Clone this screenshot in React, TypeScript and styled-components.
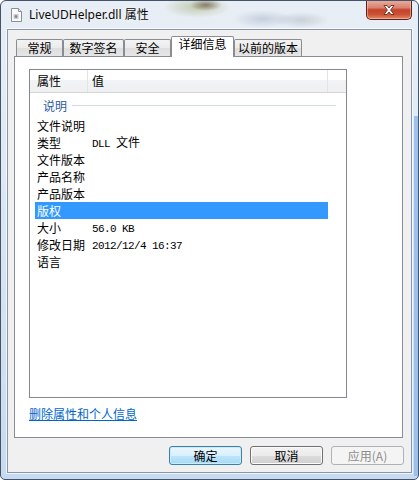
import React from 'react';
import styled, { createGlobalStyle, css } from 'styled-components';

const GlobalStyle = createGlobalStyle`
  html, body { margin: 0; padding: 0; background: #ffffff; }
  body { font-family: "Noto Sans CJK SC", "Noto Sans", sans-serif; font-size: 12px; color: #000; }
  * { box-sizing: border-box; }
`;

const Window = styled.div`
  position: relative;
  width: 419px;
  height: 480px;
  border: 1px solid #43536a;
  border-radius: 6px 6px 5px 5px;
  display: flex;
  flex-direction: column;
  overflow: hidden;
  background-color: #d3e1f1;
  background-image:
    linear-gradient(to right, transparent 413px, rgba(150, 189, 236, 0.9) 413px),
    radial-gradient(ellipse 16px 6px at 205px 4px, rgba(90, 66, 40, 0.6), transparent),
    radial-gradient(ellipse 34px 11px at 196px 6px, rgba(150, 160, 92, 0.45), transparent),
    radial-gradient(ellipse 30px 9px at 262px 18px, rgba(120, 140, 170, 0.3), transparent),
    radial-gradient(ellipse 28px 8px at 300px 19px, rgba(130, 140, 150, 0.3), transparent),
    linear-gradient(to bottom, #e8eef5 0%, #dfe8f3 35%, #c8daef 100%);
  background-size: 100% 360px, 100% 100%, 100% 100%, 100% 100%, 100% 100%, 100% 100%;
  background-position: 0 115px, 0 0, 0 0, 0 0, 0 0, 0 0;
  background-repeat: no-repeat;
`;

const TitleBar = styled.div`
  flex: none;
  height: 28px;
  display: flex;
  align-items: center;
  padding-left: 10px;
  gap: 7px;
`;

const TitleText = styled.span`
  font-family: "Noto Sans", "Noto Sans CJK SC", sans-serif;
  font-size: 12px;
  line-height: 16px;
  color: #0b0b0b;
  text-shadow: 0 0 6px rgba(255, 255, 255, 0.9);
`;

const CloseButton = styled.div`
  position: absolute;
  top: -1px;
  right: 6px;
  width: 46px;
  height: 20px;
  border: 1px solid #5c2118;
  border-top: none;
  border-radius: 0 0 5px 5px;
  background: linear-gradient(
    to bottom,
    #eab0a2 0%,
    #d9826f 40%,
    #c4432c 52%,
    #cc4f34 75%,
    #e08a63 100%
  );
  box-shadow: inset 0 0 0 1px rgba(255, 210, 200, 0.5);
  display: flex;
  align-items: center;
  justify-content: center;
`;

const Client = styled.div`
  flex: 1;
  margin: 0 6px 6px 6px;
  border: 1px solid #8596ad;
  box-shadow: 0 0 0 1px rgba(255, 255, 255, 0.7);
  background: #f0f0f0;
  padding: 6px 8px 0 6px;
  display: flex;
  flex-direction: column;
`;

const TabStrip = styled.div`
  flex: none;
  height: 20px;
  padding-left: 2px;
  display: flex;
  align-items: flex-end;
  position: relative;
  z-index: 1;
`;

const Tab = styled.div<{ $w: number; $active?: boolean }>`
  width: ${(p) => p.$w}px;
  flex: none;
  text-align: center;
  border: 1px solid #898c95;
  border-bottom: none;
  border-radius: 2px 2px 0 0;
  font-size: 12px;
  ${(p) =>
    p.$active
      ? css`
          height: 21px;
          margin-bottom: -1px;
          background: #ffffff;
          line-height: 14px;
        `
      : css`
          height: 17px;
          background: linear-gradient(to bottom, #f3f3f3 0%, #ebebeb 50%, #dedede 51%, #e6e6e6 100%);
          line-height: 16px;
        `}
`;

const Panel = styled.div`
  flex: none;
  height: 382px;
  border: 1px solid #898c95;
  background: #ffffff;
  padding: 12px 0 0 14px;
  display: flex;
  flex-direction: column;
  align-items: flex-start;
`;

const ListView = styled.div`
  width: 318px;
  height: 329px;
  border: 1px solid #828790;
  background: #ffffff;
  overflow: hidden;
`;

const Header = styled.div`
  height: 23px;
  display: flex;
  border-bottom: 1px solid #d5d5d5;
  background: linear-gradient(to bottom, #ffffff 0%, #ffffff 45%, #f2f3f5 46%, #eef0f2 100%);
`;

const HeaderCell = styled.div<{ $w?: number; $pad?: number }>`
  ${(p) => (p.$w ? `width: ${p.$w}px; flex: none;` : 'flex: 1;')}
  padding-left: ${(p) => p.$pad ?? 0}px;
  line-height: 22px;
  font-size: 12px;
  border-right: ${(p) => (p.$w ? '1px solid #e2e4e8' : 'none')};
`;

const GroupHeader = styled.div`
  height: 24px;
  display: flex;
  align-items: center;
  padding-left: 13px;
  gap: 5px;
  color: #2d5a9e;
  font-size: 12px;
`;

const GroupLine = styled.div`
  flex: 1;
  height: 1px;
  margin-right: 10px;
  background: #d3dbe6;
`;

const Row = styled.div<{ $selected?: boolean }>`
  height: 17px;
  width: 293px;
  margin-left: 5px;
  padding-left: 2px;
  display: flex;
  align-items: center;
  line-height: 17px;
  font-size: 12px;
  white-space: nowrap;
  background: ${(p) => (p.$selected ? '#3399ff' : 'transparent')};
  color: ${(p) => (p.$selected ? '#ffffff' : '#000000')};
`;

const Label = styled.span`
  width: 55px;
  flex: none;
`;

const Value = styled.span`
  flex: 1;
`;

const Mono = styled.span`
  font-family: "Liberation Mono", monospace;
  font-size: 11px;
  letter-spacing: -0.6px;
  white-space: pre;
`;

const Link = styled.a`
  margin-top: 7px;
  line-height: 17px;
  font-size: 12px;
  color: #0066cc;
  text-decoration: underline;
  cursor: pointer;
`;

const ButtonRow = styled.div`
  margin-top: 8px;
  margin-right: -1px;
  display: flex;
  justify-content: flex-end;
  gap: 8px;
`;

const Button = styled.div<{ $variant?: 'default' | 'normal' | 'disabled' }>`
  width: 73px;
  height: 19px;
  border-radius: 3px;
  text-align: center;
  font-size: 12px;
  line-height: 17px;
  ${(p) =>
    p.$variant === 'default'
      ? css`
          border: 1px solid #3c7fb1;
          background: linear-gradient(to bottom, #eaf6fd 0%, #d9f0fc 50%, #bee6fd 51%, #a7d9f5 100%);
          box-shadow: inset 0 0 0 1px #c9ecfb;
          color: #000;
        `
      : p.$variant === 'disabled'
      ? css`
          border: 1px solid #adb2b5;
          background: #f4f4f4;
          color: #8d8d8d;
        `
      : css`
          border: 1px solid #707070;
          background: linear-gradient(to bottom, #f2f2f2 0%, #ebebeb 50%, #dddddd 51%, #cfcfcf 100%);
          box-shadow: inset 0 0 0 1px #fbfbfb;
          color: #000;
        `}
`;

const DllIcon = () => (
  <svg width="11" height="14" viewBox="0 0 11 14">
    <path d="M0.5 0.5 H7.5 L10.5 3.5 V13.5 H0.5 Z" fill="#fbfbfb" stroke="#8a8f96" />
    <path d="M7.5 0.5 V3.5 H10.5" fill="#e4e6ea" stroke="#8a8f96" />
    <rect x="2.5" y="6" width="5" height="5" fill="#c9ccd1" />
    <circle cx="5" cy="8.5" r="1.3" fill="#7d838b" />
  </svg>
);

const CloseGlyph = () => (
  <svg width="14" height="12" viewBox="0 0 14 12">
    <path
      d="M2 1.5 L5 1.5 L7 4 L9 1.5 L12 1.5 L8.6 6 L12 10.5 L9 10.5 L7 8 L5 10.5 L2 10.5 L5.4 6 Z"
      fill="#ffffff"
      stroke="#6b2a1f"
      strokeWidth="0.9"
      strokeLinejoin="round"
    />
  </svg>
);

const renderValue = (text: string) => {
  const parts = text.match(/[\x00-\x7f]+|[^\x00-\x7f]+/g) || [];
  return parts.map((part, i) =>
    /^[\x00-\x7f]+$/.test(part) ? <Mono key={i}>{part}</Mono> : <span key={i}>{part}</span>
  );
};

const rows: { label: string; value: string; selected?: boolean }[] = [
  { label: '文件说明', value: '' },
  { label: '类型', value: 'DLL 文件' },
  { label: '文件版本', value: '' },
  { label: '产品名称', value: '' },
  { label: '产品版本', value: '' },
  { label: '版权', value: '', selected: true },
  { label: '大小', value: '56.0 KB' },
  { label: '修改日期', value: '2012/12/4 16:37' },
  { label: '语言', value: '' },
];

const tabs: { label: string; w: number; active?: boolean }[] = [
  { label: '常规', w: 47 },
  { label: '数字签名', w: 61 },
  { label: '安全', w: 47 },
  { label: '详细信息', w: 63, active: true },
  { label: '以前的版本', w: 68 },
];

export default function App() {
  return (
    <>
      <GlobalStyle />
      <Window>
        <TitleBar>
          <DllIcon />
          <TitleText>LiveUDHelper.dll 属性</TitleText>
        </TitleBar>
        <CloseButton>
          <CloseGlyph />
        </CloseButton>
        <Client>
          <TabStrip>
            {tabs.map((t) => (
              <Tab key={t.label} $w={t.w} $active={t.active}>
                {t.label}
              </Tab>
            ))}
          </TabStrip>
          <Panel>
            <ListView>
              <Header>
                <HeaderCell $w={58} $pad={7}>属性</HeaderCell>
                <HeaderCell $w={240} $pad={4}>值</HeaderCell>
                <HeaderCell />
              </Header>
              <GroupHeader>
                <span>说明</span>
                <GroupLine />
              </GroupHeader>
              {rows.map((r) => (
                <Row key={r.label} $selected={r.selected}>
                  <Label>{r.label}</Label>
                  <Value>{renderValue(r.value)}</Value>
                </Row>
              ))}
            </ListView>
            <Link>删除属性和个人信息</Link>
          </Panel>
          <ButtonRow>
            <Button $variant="default">确定</Button>
            <Button>取消</Button>
            <Button $variant="disabled">应用(A)</Button>
          </ButtonRow>
        </Client>
      </Window>
    </>
  );
}
